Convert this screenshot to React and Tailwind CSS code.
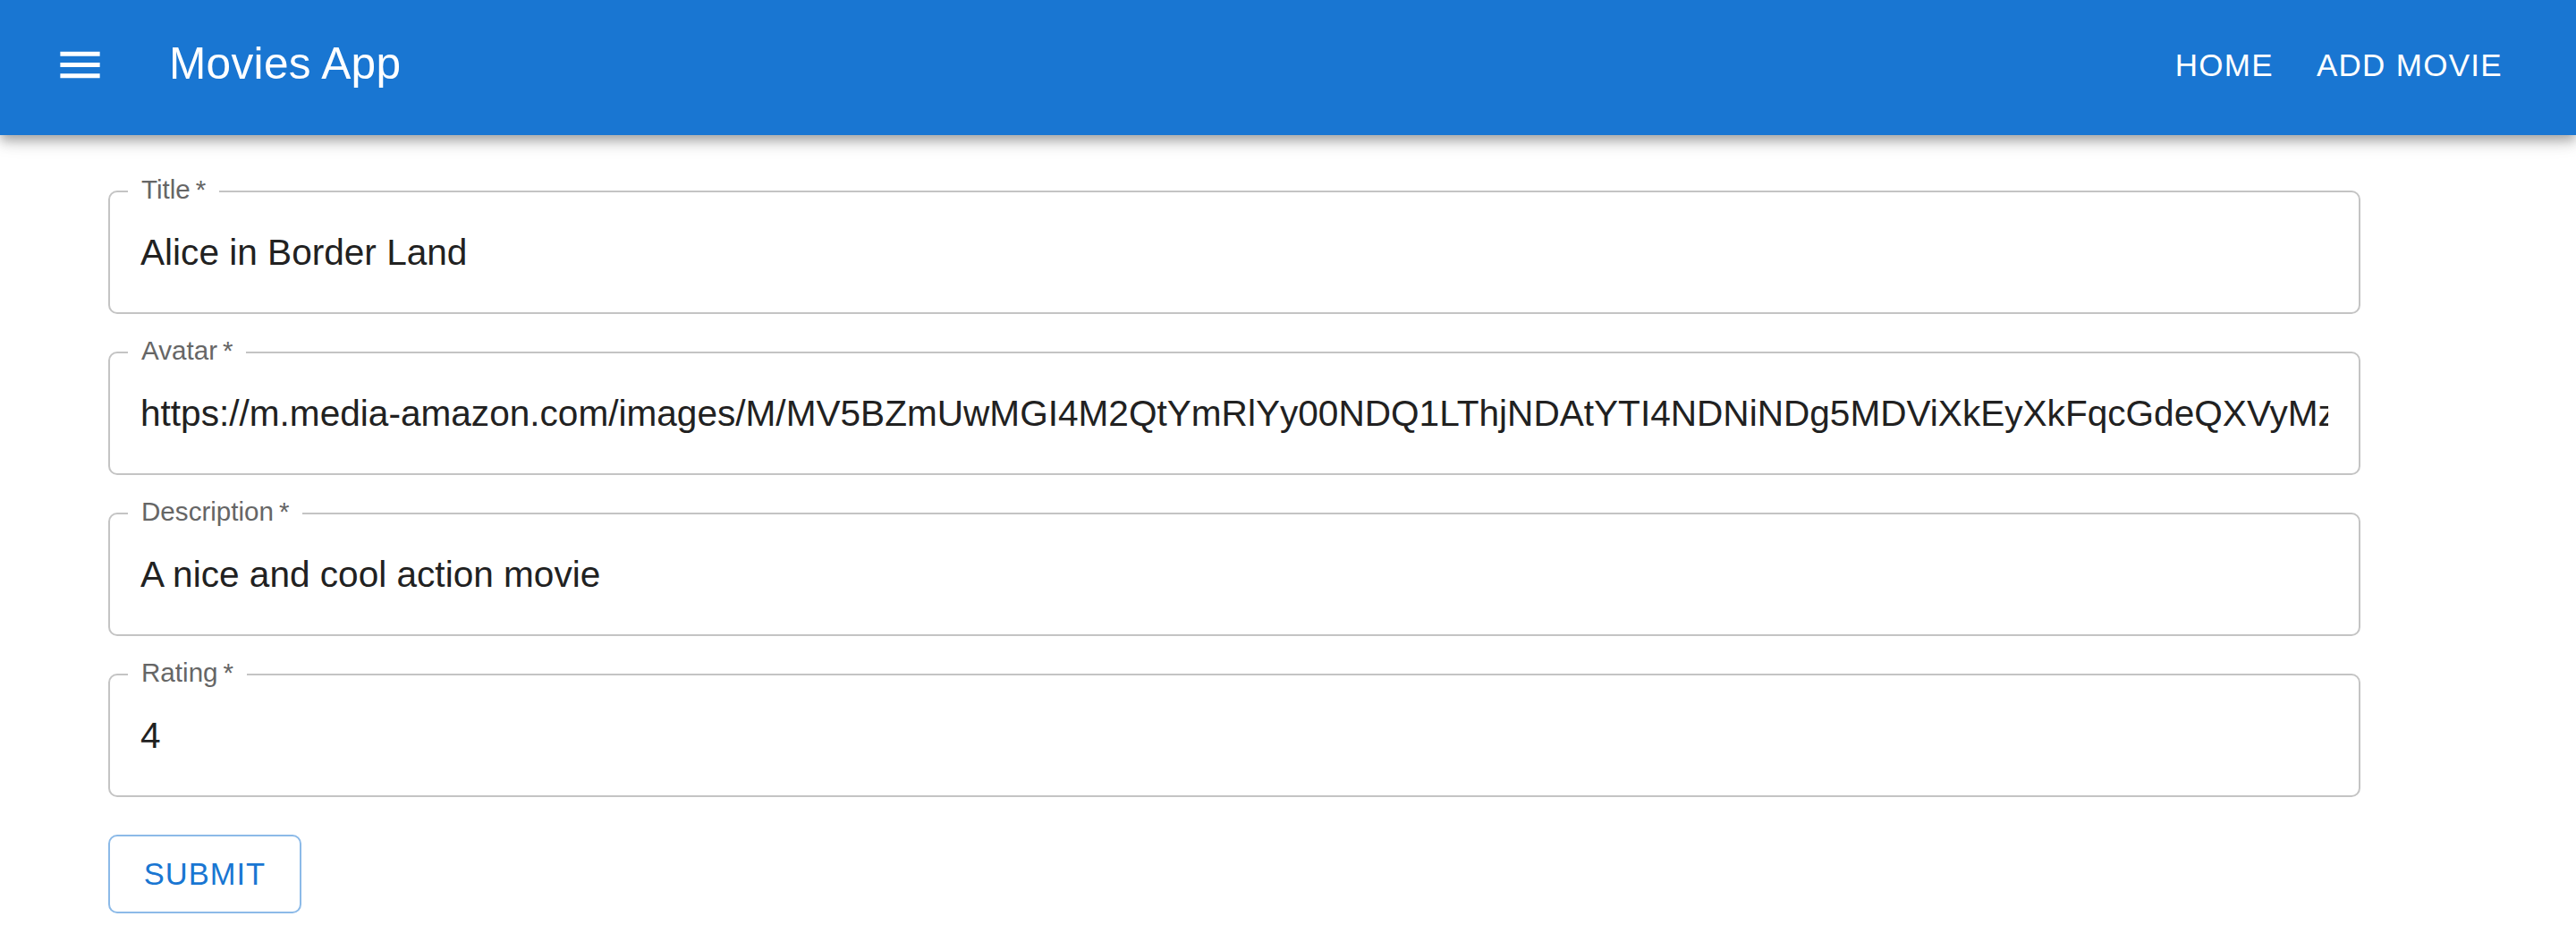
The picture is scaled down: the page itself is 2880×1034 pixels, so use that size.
import React from "react";

const FONT = { fontFamily: '"Liberation Sans", Arial, Helvetica, sans-serif' };

function Field({ label, value }) {
  return (
    <div className="relative h-[138px] w-[2518px] rounded-[10px] border-2 border-[#c4c4c4]">
      <span className="absolute left-[20px] top-[-18px] bg-white px-[15px] text-[29.6px] leading-none text-[#666666]">
        {label}
        {"\u2009*"}
      </span>
      <div className="flex h-full items-center px-[34px]">
        <div className="w-full overflow-hidden whitespace-nowrap text-[40.6px] leading-[1.3] text-[#212121]">
          {value}
        </div>
      </div>
    </div>
  );
}

export default function App() {
  return (
    <div className="min-h-[1034px] w-[2880px] bg-white" style={FONT}>
      <header className="relative z-10 flex h-[151px] items-center bg-[#1976d2] pb-[7px] text-white shadow-[0px_5px_10px_-2px_rgba(0,0,0,0.2),0px_10px_12px_0px_rgba(0,0,0,0.14),0px_3px_25px_0px_rgba(0,0,0,0.12)]">
        <div className="ml-[60px] flex h-[59px] w-[59px] items-center justify-center">
          <svg viewBox="0 0 24 24" className="h-[59px] w-[59px]" fill="white">
            <path d="M3 18h18v-2H3zm0-5h18v-2H3zm0-7v2h18V6z" />
          </svg>
        </div>
        <div className="ml-[70px] text-[49.6px] leading-none tracking-[0.3px]">Movies App</div>
        <nav className="ml-auto mr-[62px] flex items-center gap-[8px]">
          <span className="px-[20px] text-[35px] uppercase leading-none tracking-[1.3px]">Home</span>
          <span className="px-[20px] text-[35px] uppercase leading-none tracking-[1.3px]">Add Movie</span>
        </nav>
      </header>
      <main className="flex flex-col items-start gap-[42px] pl-[121px] pt-[62px]">
        <Field label="Title" value="Alice in Border Land" />
        <Field
          label="Avatar"
          value="https://m.media-amazon.com/images/M/MV5BZmUwMGI4M2QtYmRlYy00NDQ1LThjNDAtYTI4NDNiNDg5MDViXkEyXkFqcGdeQXVyMzQ2MDI5NjU@._V1_.jpg"
        />
        <Field label="Description" value="A nice and cool action movie" />
        <Field label="Rating" value="4" />
        <button className="flex h-[88px] w-[216px] items-center justify-center rounded-[10px] border-2 border-[#8cbae8] bg-white text-[34.5px] uppercase leading-none tracking-[1px] text-[#1976d2]">
          Submit
        </button>
      </main>
    </div>
  );
}
